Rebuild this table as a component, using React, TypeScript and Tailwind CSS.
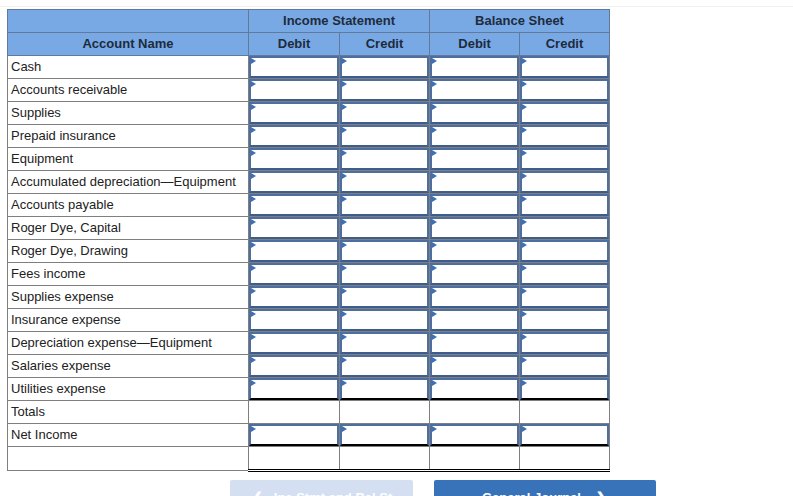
import React from "react";

const accounts = [
  "Cash",
  "Accounts receivable",
  "Supplies",
  "Prepaid insurance",
  "Equipment",
  "Accumulated depreciation\u2014Equipment",
  "Accounts payable",
  "Roger Dye, Capital",
  "Roger Dye, Drawing",
  "Fees income",
  "Supplies expense",
  "Insurance expense",
  "Depreciation expense\u2014Equipment",
  "Salaries expense",
  "Utilities expense",
];

function InputCell({ last }: { last?: boolean }) {
  return (
    <td className="p-0 border border-[#7f7f7f] h-[23px]">
      <div
        className={`relative h-[22px] border-2 border-[#4d6e9f] ${
          last ? "border-b-black" : "border-b-[#3d5d8c]"
        } bg-white`}
      >
        <span className="absolute left-0 top-0 w-0 h-0 border-t-[3px] border-b-[3px] border-l-[5px] border-t-transparent border-b-transparent border-l-[#3f6fb5]" />
      </div>
    </td>
  );
}

function PlainCell({ double }: { double?: boolean }) {
  return (
    <td
      className={`p-0 border border-[#7f7f7f] h-[23px] ${
        double ? "border-b-[3px] border-b-black border-double" : ""
      }`}
    >
      <div className="h-[22px]" />
    </td>
  );
}

export default function App() {
  const font = { fontFamily: '"Liberation Sans", Arial, sans-serif' };
  return (
    <div className="w-[793px] h-[496px] bg-white overflow-hidden relative" style={font}>
      <div className="h-[6px]" />
      <div className="border-t border-[#efefef]" />
      <div className="pl-[7px] pt-[2px]">
        <table className="border-collapse table-fixed w-[603px] text-[13px] text-[#222]">
          <colgroup>
            <col className="w-[241px]" />
            <col className="w-[91px]" />
            <col className="w-[90px]" />
            <col className="w-[90px]" />
            <col className="w-[90px]" />
          </colgroup>
          <thead>
            <tr className="bg-[#78a9e5] text-[#1e2b3c] font-bold h-[23px]">
              <th className="border border-[#61799b] p-0" />
              <th colSpan={2} className="border border-[#61799b] p-0 font-bold text-center">
                Income Statement
              </th>
              <th colSpan={2} className="border border-[#61799b] p-0 font-bold text-center">
                Balance Sheet
              </th>
            </tr>
            <tr className="bg-[#78a9e5] text-[#1e2b3c] h-[23px]">
              <th className="border border-[#61799b] p-0 font-bold text-center">Account Name</th>
              <th className="border border-[#61799b] p-0 font-bold text-center">Debit</th>
              <th className="border border-[#61799b] p-0 font-bold text-center">Credit</th>
              <th className="border border-[#61799b] p-0 font-bold text-center">Debit</th>
              <th className="border border-[#61799b] p-0 font-bold text-center">Credit</th>
            </tr>
          </thead>
          <tbody>
            {accounts.map((a, i) => (
              <tr key={a} className="h-[23px]">
                <td className="border border-[#7f7f7f] px-[3px] py-0 text-[#222] leading-[22px] whitespace-nowrap">
                  {a}
                </td>
                <InputCell last={i === accounts.length - 1} />
                <InputCell last={i === accounts.length - 1} />
                <InputCell last={i === accounts.length - 1} />
                <InputCell last={i === accounts.length - 1} />
              </tr>
            ))}
            <tr className="h-[23px]">
              <td className="border border-[#7f7f7f] px-[3px] py-0 leading-[22px]">Totals</td>
              <PlainCell />
              <PlainCell />
              <PlainCell />
              <PlainCell />
            </tr>
            <tr className="h-[23px]">
              <td className="border border-[#7f7f7f] px-[3px] py-0 leading-[22px]">Net Income</td>
              <InputCell last />
              <InputCell last />
              <InputCell last />
              <InputCell last />
            </tr>
            <tr className="h-[23px]">
              <td className="border border-[#7f7f7f] p-0" />
              <PlainCell double />
              <PlainCell double />
              <PlainCell double />
              <PlainCell double />
            </tr>
          </tbody>
        </table>
      </div>
      <div className="absolute left-[230px] top-[480px] flex gap-[21px]">
        <div className="w-[183px] h-[36px] bg-[#d4e0f1] rounded-[2px] flex items-center justify-center gap-[10px] text-white text-[13px] font-bold">
          <span className="text-[15px] font-normal">&#10094;</span>
          <span>Inc Stmt and Bal St</span>
        </div>
        <div className="w-[222px] h-[36px] bg-[#3873ba] rounded-[2px] flex items-center justify-center gap-[14px] text-white text-[13px] font-bold">
          <span>General Journal</span>
          <span className="text-[15px] font-normal">&#10095;</span>
        </div>
      </div>
    </div>
  );
}
